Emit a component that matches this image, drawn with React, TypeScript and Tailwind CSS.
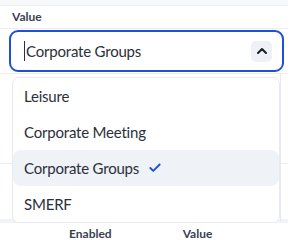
import { Check, ChevronUp } from 'lucide-react';

const OPTIONS = ['Leisure', 'Corporate Meeting', 'Corporate Groups', 'SMERF'];
const selected = 'Corporate Groups';

export default function App() {
  return (
    <div className="h-[240px] w-[300px] overflow-hidden bg-white font-['Lato',sans-serif] text-[#2b2f3a]">
      <div className="relative w-[288px]">
        <div className="h-[5px] bg-[#f7f8fa]" />
        <div className="flex h-[24px] items-center border-y border-[#eceef2] pl-[12px] text-[12px] font-bold text-[#3a4152]">
          Value
        </div>
        <div className="flex h-[45px] items-center border-b border-[#eceef2] pl-[9px] pr-[4px]">
          <div className="flex h-[42px] w-full items-center rounded-[9px] border-2 border-[#1f4fd8] pl-[13px] pr-[10px]">
            <span className="mr-[1px] h-[20px] w-px bg-[#2b2f3a]" />
            <span className="flex-1 text-[15px] tracking-[-0.2px]">{selected}</span>
            <span className="flex h-[21px] w-[21px] items-center justify-center rounded-[5px] bg-[#eef1f6]">
              <ChevronUp size={16} strokeWidth={3} className="text-[#1c1f26]" />
            </span>
          </div>
        </div>
        <div className="flex h-[145px] flex-col">
          <div className="h-[90px] border-b border-[#eceef2]" />
          <div className="flex-1" />
        </div>
        <div className="h-[4px] bg-[#f2f3f6]" />
        <div className="flex h-[21px] items-center text-[12px] font-bold text-[#3a4152]">
          <span className="ml-[69px]">Enabled</span>
          <span className="ml-[71px]">Value</span>
        </div>

        <div className="absolute left-[280px] top-[73px] h-[149px] w-px bg-[#e6e9ee]" />

        <div className="absolute left-[12px] top-[77px] w-[268px] rounded-[7px] border border-[#e8eaef] bg-white">
          {OPTIONS.map((option) => (
            <div
              key={option}
              className={
                option === selected
                  ? 'flex h-[36px] items-center rounded-[8px] bg-[#eff2f7] pl-[11px] text-[15px] tracking-[-0.2px]'
                  : 'flex h-[36px] items-center pl-[11px] text-[15px] tracking-[-0.2px]'
              }
            >
              {option}
              {option === selected ? (
                <Check size={14} strokeWidth={3.2} className="ml-[9px] text-[#1f4fd8]" />
              ) : null}
            </div>
          ))}
        </div>
      </div>
    </div>
  );
}
